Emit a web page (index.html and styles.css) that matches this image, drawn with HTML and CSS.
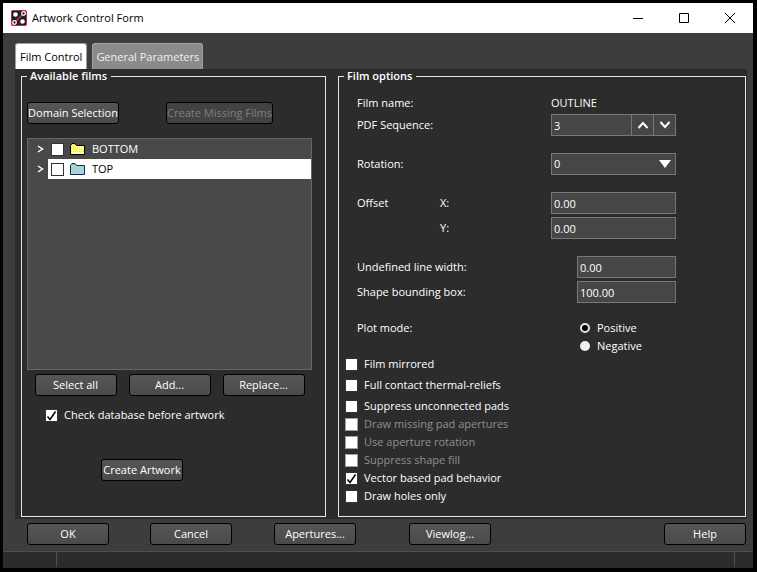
FILE: index.html
```html
<!DOCTYPE html>
<html lang="en">
<head>
  <meta charset="UTF-8" />
  <meta name="viewport" content="width=device-width, initial-scale=1" />
  <title>Artwork Control Form</title>
  <link rel="stylesheet" href="styles.css">
</head>
<body>
  <div class="window">
    <header class="titlebar">
      <svg class="app-icon" viewBox="0 0 16 16" aria-hidden="true">
        <rect x="0" y="0" width="16" height="16" rx="2" fill="#d21f3c" />
        <path d="M1 1h13L1 14zM15 2v13H2z" fill="#10232f" />
        <path d="M3.500 12.500l9-9" stroke="#d21f3c" stroke-width="1.500" />
        <circle cx="4.500" cy="4.500" r="2.300" fill="#fff" />
        <circle cx="11.500" cy="11.500" r="2.300" fill="#fff" />
        <circle cx="12.500" cy="3.500" r="1.800" fill="#10232f" stroke="#fff" stroke-width="1.300" />
        <circle cx="3.500" cy="12.500" r="1.800" fill="#10232f" stroke="#fff" stroke-width="1.300" />
      </svg>
      <h1>Artwork Control Form</h1>
      <div class="window-controls">
        <button type="button" aria-label="Minimize">
          <svg viewBox="0 0 10 10"><path d="M0 5.500h10" /></svg>
        </button>
        <button type="button" aria-label="Maximize">
          <svg viewBox="0 0 10 10"><path d="M.5.5h9v9h-9z" /></svg>
        </button>
        <button type="button" aria-label="Close">
          <svg viewBox="0 0 10 10"><path d="M0 0l10 10M10 0L0 10" /></svg>
        </button>
      </div>
    </header>

    <nav class="tabs" role="tablist">
      <button type="button" class="tab active" role="tab" aria-selected="true">Film Control</button>
      <button type="button" class="tab" role="tab" aria-selected="false">General Parameters</button>
    </nav>

    <main class="panel">
      <fieldset class="group">
        <legend>Available films</legend>
        <div class="films">
          <div class="film-tools">
            <button type="button" class="btn tight">Domain Selection</button>
            <button type="button" class="btn tight" disabled>Create Missing Films</button>
          </div>

          <ul class="film-list">
            <li>
              <button type="button" class="expander" aria-label="Expand BOTTOM">
                <svg viewBox="0 0 7 8"><path d="M1 1l4.500 3L1 7" /></svg>
              </button>
              <div class="film">
                <input type="checkbox" id="film-bottom" />
                <svg class="folder" viewBox="0 0 16 12" aria-hidden="true">
                  <path d="M.5 11.500V2.500L2 .5h3l1.500 2h8v9z" fill="#ffffa0" stroke="#000" />
                  <path d="M2 1.500h3" stroke="#ffff00" />
                  <path d="M1 4.500h13M1 6.500h13M1 8.500h13" stroke="#f2e23a" stroke-dasharray="1 1" />
                </svg>
                <label for="film-bottom">BOTTOM</label>
              </div>
            </li>
            <li>
              <button type="button" class="expander" aria-label="Expand TOP">
                <svg viewBox="0 0 7 8"><path d="M1 1l4.500 3L1 7" /></svg>
              </button>
              <div class="film selected">
                <input type="checkbox" id="film-top" />
                <svg class="folder" viewBox="0 0 16 12" aria-hidden="true">
                  <path d="M.5 11.500V2.500L2 .5h3l1.500 2h8v9z" fill="#a6d2e8" stroke="#0d2b52" />
                  <path d="M2 1.500h3" stroke="#8fc36b" />
                  <path d="M1 4.500h13M1 6.500h13M1 8.500h13" stroke="#b9d79a" stroke-dasharray="1 1" />
                </svg>
                <label for="film-top">TOP</label>
              </div>
            </li>
          </ul>

          <div class="film-actions">
            <button type="button" class="btn">Select all</button>
            <button type="button" class="btn">Add...</button>
            <button type="button" class="btn">Replace...</button>
          </div>

          <div class="check database-check">
            <input type="checkbox" id="check-db" checked />
            <label for="check-db">Check database before artwork</label>
          </div>

          <button type="button" class="btn tight create">Create Artwork</button>
        </div>
      </fieldset>

      <fieldset class="group">
        <legend>Film options</legend>
        <div class="options">
          <div class="field">
            <span class="name">Film name:</span>
            <output class="value">OUTLINE</output>
          </div>
          <div class="field">
            <label class="name" for="pdf-seq">PDF Sequence:</label>
            <div class="value stepper">
              <input type="text" id="pdf-seq" value="3" />
              <button type="button" aria-label="Increase">
                <svg viewBox="0 0 12 8"><path d="M1.500 7L6 2l4.500 5" /></svg>
              </button>
              <button type="button" aria-label="Decrease">
                <svg viewBox="0 0 12 8"><path d="M1.500 1L6 6l4.500-5" /></svg>
              </button>
            </div>
          </div>
          <div class="field spaced">
            <label class="name" for="rotation">Rotation:</label>
            <div class="value dropdown">
              <select id="rotation">
                <option>0</option>
                <option>90</option>
                <option>180</option>
                <option>270</option>
              </select>
              <svg viewBox="0 0 12 8" aria-hidden="true"><path d="M0 0h12L6 8z" /></svg>
            </div>
          </div>
          <div class="field spaced">
            <span>Offset</span>
            <label for="offset-x">X:</label>
            <input class="value" type="text" id="offset-x" value="0.00" />
          </div>
          <div class="field stacked">
            <label class="second" for="offset-y">Y:</label>
            <input class="value" type="text" id="offset-y" value="0.00" />
          </div>
          <div class="field spaced">
            <label class="name" for="line-width">Undefined line width:</label>
            <input class="value short" type="text" id="line-width" value="0.00" />
          </div>
          <div class="field stacked">
            <label class="name" for="bounding-box">Shape bounding box:</label>
            <input class="value short" type="text" id="bounding-box" value="100.00" />
          </div>
          <div class="field plot-mode" role="radiogroup" aria-labelledby="plot-label">
            <span class="name" id="plot-label">Plot mode:</span>
            <div class="value short">
              <div class="radio">
                <input type="radio" name="plot" id="plot-positive" checked />
                <label for="plot-positive">Positive</label>
              </div>
              <div class="radio">
                <input type="radio" name="plot" id="plot-negative" />
                <label for="plot-negative">Negative</label>
              </div>
            </div>
          </div>
        </div>

        <div class="flags">
          <div class="check">
            <input type="checkbox" id="mirrored" />
            <label for="mirrored">Film mirrored</label>
          </div>
          <div class="check apart">
            <input type="checkbox" id="thermal" />
            <label for="thermal">Full contact thermal-reliefs</label>
          </div>
          <div class="check apart">
            <input type="checkbox" id="unconnected" />
            <label for="unconnected">Suppress unconnected pads</label>
          </div>
          <div class="check">
            <input type="checkbox" id="missing-pads" disabled />
            <label for="missing-pads">Draw missing pad apertures</label>
          </div>
          <div class="check">
            <input type="checkbox" id="aperture-rotation" disabled />
            <label for="aperture-rotation">Use aperture rotation</label>
          </div>
          <div class="check">
            <input type="checkbox" id="shape-fill" disabled />
            <label for="shape-fill">Suppress shape fill</label>
          </div>
          <div class="check">
            <input type="checkbox" id="vector-pad" checked />
            <label for="vector-pad">Vector based pad behavior</label>
          </div>
          <div class="check">
            <input type="checkbox" id="holes-only" />
            <label for="holes-only">Draw holes only</label>
          </div>
        </div>
      </fieldset>
    </main>

    <div class="dialog-buttons">
      <button type="button" class="btn">OK</button>
      <button type="button" class="btn">Cancel</button>
      <button type="button" class="btn">Apertures...</button>
      <button type="button" class="btn">Viewlog...</button>
      <button type="button" class="btn">Help</button>
    </div>

    <footer class="statusbar">
      <span></span>
      <span></span>
      <span></span>
    </footer>
  </div>
</body>
</html>
```
FILE: styles.css
```css
* {
  box-sizing: border-box;
}
body {
  margin: 0;
  background: #000;
  color: #fff;
  font-family: "Open Sans", "Noto Sans", sans-serif;
  font-size: 11px;
  line-height: 14px;
}
button, input, select {
  margin: 0;
  font: inherit;
  color: inherit;
}
svg {
  display: block;
  fill: none;
}
.window {
  display: flex;
  flex-direction: column;
  min-height: 100vh;
  padding: 1px 3px 3px 2px;
  background: #3d3d3d;
  border: solid #000;
  border-width: 2px 1px 1px;
  background-clip: content-box;
}

/* title bar */
.titlebar {
  display: flex;
  align-items: center;
  height: 30px;
  padding-left: 8px;
  background: #fff;
  color: #000;
}
.app-icon {
  width: 16px;
  height: 16px;
  margin-right: 5px;
}
h1 {
  margin: 0;
  font-size: 11px;
  font-weight: normal;
}
.window-controls {
  display: flex;
  margin-left: auto;
}
.window-controls button {
  display: grid;
  place-items: center;
  width: 46px;
  height: 30px;
  padding: 0;
  border: 0;
  background: none;
}
.window-controls svg {
  width: 10px;
  height: 10px;
  stroke: #000;
}

/* tabs */
.tabs {
  display: flex;
  gap: 5px;
  padding: 10px 12px 0;
}
.tab {
  height: 26px;
  padding: 0 3px;
  border: 1px solid #a0a0a0;
  border-bottom: 0;
  border-radius: 3px 3px 0 0;
  background: #8b8b8b;
  color: #f0f0f0;
}
.tab.active {
  padding: 0 4px;
  background: #fff;
  color: #000;
}

.panel {
  flex: 1;
  display: grid;
  grid-template-columns: 305fr 408fr;
  gap: 12px;
  margin: 0 6px 0 12px;
  padding: 0 1px 2px 6px;
  background: #2c2c2c;
}
.group {
  min-width: 0;
  margin: 0;
  padding: 0 0 8px 5px;
  border: 1px solid #e6e6e6;
}
legend {
  padding: 0 4px 0 3px;
  font-weight: 600;
}

/* buttons */
.btn {
  width: 82px;
  height: 22px;
  padding: 0;
  border: 1px solid #000;
  border-radius: 3px;
  background: linear-gradient(#565656, #4a4a4a);
  white-space: nowrap;
}
.btn:disabled {
  background: #424242;
  color: #808080;
}

/* check boxes and radios */
input[type="checkbox"] {
  appearance: none;
  flex: none;
  width: 13px;
  height: 13px;
  border: 1px solid #333;
  background: #fff;
}
input[type="checkbox"]:checked {
  background: #fff url("data:image/svg+xml,%3Csvg xmlns='http://www.w3.org/2000/svg' viewBox='0 0 11 11'%3E%3Cpath d='M1.500 6.500l2.500 3L9.500 1.500' fill='none' stroke='black' stroke-width='1.500'/%3E%3C/svg%3E");
}
input[type="checkbox"]:disabled {
  border-color: #a0a0a0;
}
input:disabled + label {
  color: #8f8f8f;
}
input[type="radio"] {
  appearance: none;
  width: 10px;
  height: 10px;
  border-radius: 50%;
  background: #f0f0f0;
}
input[type="radio"]:checked {
  border: 2px solid #e6e6e6;
  background: #000;
}
.check, .radio {
  display: flex;
  align-items: center;
  gap: 6px;
  height: 18px;
}
.radio {
  gap: 7px;
  padding-left: 3px;
}
.check.apart {
  margin-top: 3px;
}

/* available films */
.films {
  padding: 19px 13px 0 0;
}
.film-tools {
  display: flex;
  gap: 47px;
}
.film-tools .btn {
  width: 92px;
}
.film-tools .btn:disabled {
  width: 107px;
}
.film-list {
  height: 232px;
  margin: 14px 0 4px;
  padding: 0;
  border: 1px solid #656565;
  background: #494949;
  list-style: none;
}
.film-list li {
  display: flex;
  height: 20px;
}
.expander {
  display: grid;
  place-items: center;
  width: 20px;
  padding: 0 0 0 5px;
  border: 0;
  background: none;
}
.expander svg {
  width: 7px;
  height: 8px;
  stroke: #fff;
  stroke-width: 1.5;
}
.film {
  flex: 1;
  display: flex;
  align-items: center;
  gap: 6px;
  padding-left: 3px;
}
.film.selected {
  background: #fff;
  color: #000;
}
.folder {
  width: 16px;
  height: 12px;
}
.film-actions {
  display: flex;
  justify-content: center;
  gap: 12px;
}
.database-check {
  margin: 10px 0 35px;
  padding-left: 18px;
}
.create {
  display: block;
  margin-left: 74px;
}

/* film options */
.options {
  padding: 9px 0 0 13px;
}
.field {
  display: grid;
  grid-template-columns: 83px 111px 26px 99px;
  align-items: center;
  min-height: 22px;
}
.field .name {
  grid-column: 1 / 3;
}
.field .second {
  grid-column: 2;
}
.field .value {
  grid-column: 3 / 5;
}
.field .value.short {
  grid-column: 4;
}
.field.spaced {
  margin-top: 17px;
}
.field.stacked {
  margin-top: 3px;
}
.options input[type="text"], select {
  width: 100%;
  min-width: 0;
  height: 22px;
  padding: 0 2px;
  border: 1px solid #777;
  border-radius: 0;
  background: #464646;
}
.stepper {
  display: flex;
}
.stepper button {
  display: grid;
  place-items: center;
  flex: none;
  width: 22px;
  height: 22px;
  padding: 0;
  border: 1px solid #777;
  border-left: 0;
  background: #464646;
}
.stepper svg {
  width: 12px;
  height: 8px;
  stroke: #fff;
  stroke-width: 2;
}
.dropdown {
  position: relative;
}
select {
  display: block;
  appearance: none;
}
.dropdown svg {
  position: absolute;
  top: 7px;
  right: 5px;
  width: 12px;
  height: 8px;
  fill: #fff;
  pointer-events: none;
}
.plot-mode {
  align-items: start;
  margin-top: 16px;
}
.plot-mode .name {
  line-height: 18px;
}
.flags {
  padding-left: 1px;
}

/* bottom of the window */
.dialog-buttons {
  display: grid;
  grid-template-columns: 123px 124px 135px 1fr auto;
  padding: 4px 7px 6px 24px;
}
.statusbar {
  display: grid;
  grid-template-columns: 53px 1fr 19px;
  height: 17px;
  padding-bottom: 1px;
  border-top: 1px solid #505050;
  background: #2c2c2c;
}
.statusbar span + span {
  border-left: 1px solid #505050;
}
```
